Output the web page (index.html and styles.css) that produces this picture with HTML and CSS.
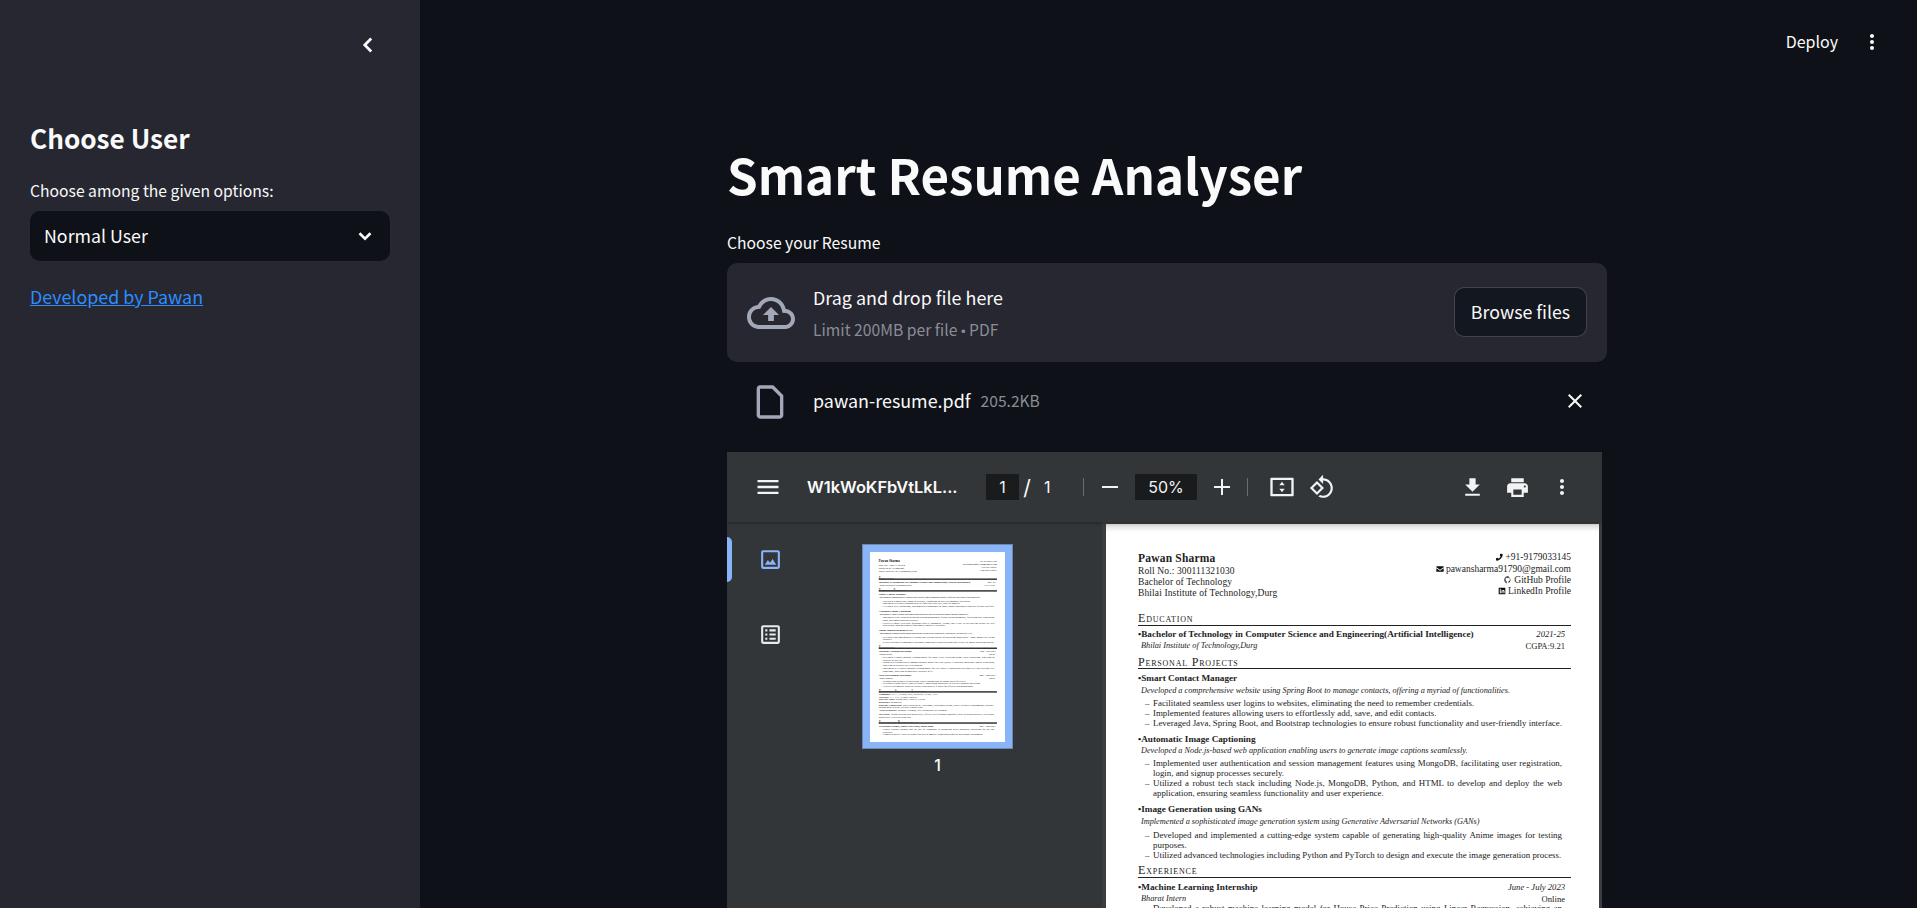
FILE: index.html
```html
<!DOCTYPE html>
<html lang="en">
<head>
<meta charset="utf-8">
<title>Smart Resume Analyser</title>
<link rel="stylesheet" href="styles.css">
</head>
<body>
<div class="app">
  <aside class="sidebar">
    <div class="collapse-row">
      <svg class="collapse-icon" viewBox="0 0 24 24"><path d="M15.5 5 8.500 12l7 7" fill="none" stroke="currentColor" stroke-width="3"/></svg>
    </div>
    <h2 class="side-title">Choose User</h2>
    <div class="field-label side-label">Choose among the given options:</div>
    <div class="select">
      <span class="select-value">Normal User</span>
      <svg class="select-icon" viewBox="0 0 24 24"><path d="M6 9l6 6 6-6" fill="none" stroke="currentColor" stroke-width="2.8"/></svg>
    </div>
    <a class="dev-link" href="#">Developed by Pawan</a>
  </aside>

  <main class="main">
    <header class="topbar">
      <span class="deploy">Deploy</span>
      <svg class="kebab" viewBox="0 0 24 24"><path fill="currentColor" d="M12 8c1.1 0 2-.9 2-2s-.9-2-2-2-2 .9-2 2 .9 2 2 2zm0 2c-1.1 0-2 .9-2 2s.9 2 2 2 2-.9 2-2-.9-2-2-2zm0 6c-1.1 0-2 .9-2 2s.9 2 2 2 2-.9 2-2-.9-2-2-2z"/></svg>
    </header>

    <div class="content">
      <h1 class="title">Smart Resume Analyser</h1>
      <div class="field-label upload-label">Choose your Resume</div>
      <section class="dropzone">
        <svg class="cloud" viewBox="0 0 24 24"><path fill="currentColor" d="M19.35 10.04C18.67 6.59 15.64 4 12 4 9.11 4 6.6 5.64 5.35 8.04 2.34 8.36 0 10.91 0 14c0 3.31 2.69 6 6 6h13c2.76 0 5-2.24 5-5 0-2.64-2.05-4.78-4.65-4.96zM19 18H6c-2.21 0-4-1.79-4-4 0-2.05 1.53-3.76 3.56-3.97l1.07-.11.5-.95C8.08 7.14 9.94 6 12 6c2.62 0 4.88 1.86 5.39 4.43l.3 1.5 1.53.11c1.56.1 2.78 1.41 2.78 2.96 0 1.65-1.35 3-3 3zM8 13h2.55v3h2.9v-3H16l-4-4z"/></svg>
        <div class="drop-text">
          <div class="drop-main">Drag and drop file here</div>
          <div class="drop-sub">Limit 200MB per file <span class="dot">•</span> PDF</div>
        </div>
        <button class="browse">Browse files</button>
      </section>
      <div class="file-row">
        <svg class="file-icon" viewBox="0 0 24 24"><path fill="currentColor" d="M13.17 4 18 8.83V20H6V4h7.17M14 2H6c-1.1 0-2 .9-2 2v16c0 1.1.9 2 2 2h12c1.1 0 2-.9 2-2V8l-6-6z"/></svg>
        <span class="file-name">pawan-resume.pdf</span>
        <span class="file-size">205.2KB</span>
        <svg class="file-close" viewBox="0 0 24 24"><path fill="currentColor" d="M19 6.41 17.59 5 12 10.59 6.41 5 5 6.41 10.59 12 5 17.59 6.41 19 12 13.41 17.59 19 19 17.59 13.41 12z"/></svg>
      </div>

      <section class="viewer">
        <div class="toolbar">
          <svg class="tb-icon tb-menu" viewBox="0 0 24 24"><path fill="currentColor" d="M3 18h18v-2H3v2zm0-5h18v-2H3v2zm0-7v2h18V6H3z"/></svg>
          <span class="doc-name">W1kWoKFbVtLkL...</span>
          <span class="num-box page-box">1</span>
          <span class="slash">/</span>
          <span class="page-total">1</span>
          <span class="tb-sep sep-a"></span>
          <svg class="tb-icon tb-minus" viewBox="0 0 24 24"><path fill="currentColor" d="M4 11h16v2H4z"/></svg>
          <span class="num-box zoom-box">50%</span>
          <svg class="tb-icon tb-plus" viewBox="0 0 24 24"><path fill="currentColor" d="M11 4h2v7h7v2h-7v7h-2v-7H4v-2h7z"/></svg>
          <span class="tb-sep sep-b"></span>
          <svg class="tb-icon tb-fit" viewBox="0 0 24 24"><path fill="currentColor" d="M21 4H3c-.6 0-1 .4-1 1v14c0 .6.4 1 1 1h18c.6 0 1-.4 1-1V5c0-.6-.4-1-1-1zm-1 14H4V6h16v12zM12 7.500 9.700 10.500h4.600zM12 16.500l2.300-3H9.700z"/></svg>
          <svg class="tb-icon tb-rotate" viewBox="0 0 24 24"><path fill="currentColor" d="M7.34 6.41.86 12.9l6.49 6.48 6.49-6.48-6.5-6.49zM3.69 12.9l3.66-3.66L11 12.9l-3.66 3.66-3.65-3.66zm15.67-6.26C17.61 4.88 15.3 4 13 4V.76L8.76 5 13 9.24V6c1.79 0 3.58.68 4.95 2.05 2.73 2.73 2.73 7.17 0 9.9C16.58 19.32 14.79 20 13 20c-.97 0-1.94-.21-2.84-.61l-1.49 1.49C10.02 21.62 11.51 22 13 22c2.3 0 4.61-.88 6.36-2.64 3.52-3.51 3.52-9.21 0-12.72z"/></svg>
          <svg class="tb-icon tb-download" viewBox="0 0 24 24"><path fill="currentColor" d="M19 9h-4V3H9v6H5l7 7 7-7zM5 18v2h14v-2H5z"/></svg>
          <svg class="tb-icon tb-print" viewBox="0 0 24 24"><path fill="currentColor" d="M19 8H5c-1.66 0-3 1.34-3 3v6h4v4h12v-4h4v-6c0-1.66-1.34-3-3-3zm-3 11H8v-5h8v5zm3-7c-.55 0-1-.45-1-1s.45-1 1-1 1 .45 1 1-.45 1-1 1zm-1-9H6v4h12V3z"/></svg>
          <svg class="tb-icon tb-more" viewBox="0 0 24 24"><path fill="currentColor" d="M12 8c1.1 0 2-.9 2-2s-.9-2-2-2-2 .9-2 2 .9 2 2 2zm0 2c-1.1 0-2 .9-2 2s.9 2 2 2 2-.9 2-2-.9-2-2-2zm0 6c-1.1 0-2 .9-2 2s.9 2 2 2 2-.9 2-2-.9-2-2-2z"/></svg>
        </div>
        <div class="viewer-body">
          <div class="rail">
            <span class="rail-mark"></span>
            <svg class="rail-icon rail-thumb" viewBox="0 0 24 24"><path fill="currentColor" d="M19 3H5c-1.1 0-2 .9-2 2v14c0 1.1.9 2 2 2h14c1.1 0 2-.9 2-2V5c0-1.1-.9-2-2-2zm0 16H5V5h14v14zM6.500 17l3-4.500 2 2.500 2.500-3.500 3.500 5.500z"/></svg>
            <svg class="rail-icon rail-list" viewBox="0 0 24 24"><path fill="currentColor" d="M19 3H5c-1.1 0-2 .9-2 2v14c0 1.1.9 2 2 2h14c1.1 0 2-.9 2-2V5c0-1.1-.9-2-2-2zm0 16H5V5h14v14zM7 7h2v2H7zm4 0h6v2h-6zm-4 4h2v2H7zm4 0h6v2h-6zm-4 4h2v2H7zm4 0h6v2h-6z"/></svg>
          </div>
          <div class="thumbs">
            <div class="thumb">
              <div class="thumb-page">
                <div class="resume resume-mini">
                  <div class="res-head"><div><div class="r-name">Pawan Sharma</div><div class="r-h">Roll No.: 300111321030</div><div class="r-h">Bachelor of Technology</div><div class="r-h">Bhilai Institute of Technology,Durg</div></div><div class="res-contact"><div class="r-h">+91-9179033145</div><div class="r-h">pawansharma91790@gmail.com</div><div class="r-h">GitHub Profile</div><div class="r-h">LinkedIn Profile</div></div></div>
                  <h3 class="r-sec r-first">Education</h3>
                  <div class="r-proj r-tight r-row"><span>•Bachelor of Technology in Computer Science and Engineering(Artificial Intelligence)</span><i class="r-date">2021-25</i></div>
                  <div class="r-desc r-row r-flat"><i>Bhilai Institute of Technology,Durg</i><span class="r-date">CGPA:9.21</span></div>
                  <h3 class="r-sec">Personal Projects</h3>
                  <div class="r-proj r-tight">•Smart Contact Manager</div>
                  <div class="r-desc r-gain"><i>Developed a comprehensive website using Spring Boot to manage contacts, offering a myriad of functionalities.</i></div>
                  <div class="r-bul">Facilitated seamless user logins to websites, eliminating the need to remember credentials.</div>
                  <div class="r-bul">Implemented features allowing users to effortlessly add, save, and edit contacts.</div>
                  <div class="r-bul">Leveraged Java, Spring Boot, and Bootstrap technologies to ensure robust functionality and user-friendly interface.</div>
                  <div class="r-proj">•Automatic Image Captioning</div>
                  <div class="r-desc"><i>Developed a Node.js-based web application enabling users to generate image captions seamlessly.</i></div>
                  <div class="r-bul r-j">Implemented user authentication and session management features using MongoDB, facilitating user registration,</div>
                  <div class="r-bul r-cont">login, and signup processes securely.</div>
                  <div class="r-bul r-j">Utilized a robust tech stack including Node.js, MongoDB, Python, and HTML to develop and deploy the web</div>
                  <div class="r-bul r-cont">application, ensuring seamless functionality and user experience.</div>
                  <div class="r-proj">•Image Generation using GANs</div>
                  <div class="r-desc r-gain"><i>Implemented a sophisticated image generation system using Generative Adversarial Networks (GANs)</i></div>
                  <div class="r-bul r-j r-gain">Developed and implemented a cutting-edge system capable of generating high-quality Anime images for testing</div>
                  <div class="r-bul r-cont">purposes.</div>
                  <div class="r-bul">Utilized advanced technologies including Python and PyTorch to design and execute the image generation process.</div>
                  <h3 class="r-sec">Experience</h3>
                  <div class="r-proj r-tight r-row"><span>•Machine Learning Internship</span><i class="r-date">June - July 2023</i></div>
                  <div class="r-desc r-row r-short"><i>Bharat Intern</i><span class="r-date">Online</span></div>
                  <div class="r-bul r-j">Developed a robust machine learning model for House Price Prediction using Linear Regression, achieving an</div>
                  <div class="r-bul r-cont">accuracy of over 85.</div>
                  <div class="r-bul r-j">Engineered a sophisticated bagging ensemble model for Wine Quality Evaluation employing Logistic Regression,</div>
                  <div class="r-bul r-cont">achieving an accuracy rate exceeding 90.</div>
                  <div class="r-bul r-j">Implemented a versatile machine learning model for Iris Flower Classification utilizing KNN and Decision Tree</div>
                  <div class="r-bul r-cont">algorithms, achieving an impressive accuracy of 97.</div>
                  <div class="r-proj r-row"><span>•Web Development Internship</span><i class="r-date">May - June 2023</i></div>
                  <div class="r-desc r-row r-short"><i>Oasis Infobyte</i><span class="r-date">Online</span></div>
                  <div class="r-bul">Designed and deployed a captivating Tribute landing page to engage users effectively.</div>
                  <div class="r-bul">Developed a high-fidelity clone of Disney+ showcasing proficiency in web development and design.</div>
                  <div class="r-bul">Created a streamlined ToDo list website with intuitive features for efficient task management.</div>
                  <h3 class="r-sec">Technical Skills and Interests</h3>
                  <div class="r-line"><b>Languages:</b> C/C++, Python, Java, JavaScript, HTML, CSS</div>
                  <div class="r-line"><b>Libraries:</b> C++ STL, Python Libraries</div>
                  <div class="r-line"><b>Web Dev Tools:</b> Spring Boot, Node.js, GitHub</div>
                  <div class="r-line"><b>Databases:</b> MongoDB</div>
                  <div class="r-line"><b>Relevant Coursework:</b> Data Structures &amp; Algorithms, Operating Systems, Object Oriented Programming, Database</div>
                  <div class="r-line">Management System, Software Engineering</div>
                  <div class="r-line"><b>Areas of Interest:</b> Machine Learning, Web Design and Development</div>
                  <div class="r-line r-gap"><b>Soft Skills:</b> Strong problem-solving abilities, effective self-learning techniques, adept presentation skills, exceptional</div>
                  <div class="r-line">adaptability to diverse situations.</div>
                  <h3 class="r-sec">Positions of Responsibility</h3>
                  <div class="r-proj r-tight r-row"><span>•Vocational Trainee, Bhilai Steel Plant, Bhilai Durg</span><i class="r-date">May - June 2023</i></div>
                  <div class="r-bul r-j">Gained valuable insights into the role of technology in optimizing heavy machinery operations for rail line</div>
                  <div class="r-bul r-cont">structures.</div>
                  <div class="r-bul">Conducted on-site visits to various facilities to immerse in and understand the operational environment.</div>
                </div>
              </div>
            </div>
            <div class="thumb-num">1</div>
          </div>
          <div class="pages">
            <article class="page">
              <div class="resume">
                <div class="res-head">
                  <div>
                    <div class="r-name">Pawan Sharma</div>
                    <div class="r-h">Roll No.: 300111321030</div>
                    <div class="r-h">Bachelor of Technology</div>
                    <div class="r-h">Bhilai Institute of Technology,Durg</div>
                  </div>
                  <div class="res-contact">
                    <div class="r-h"><svg class="c-icon" viewBox="0 0 24 24"><path fill="currentColor" d="M20 2h-4l-2 6 3 2c-1 3-3 5-6 7l-2-3-6 2v4c0 2 1 3 3 3C15 22 23 12 23 5c0-2-1-3-3-3z"/></svg> +91-9179033145</div>
                    <div class="r-h"><svg class="c-icon" viewBox="0 0 24 24"><path fill="currentColor" d="M1 4h22v3l-11 7L1 7zm0 6 11 7 11-7v10H1z"/></svg> pawansharma91790@gmail.com</div>
                    <div class="r-h"><svg class="c-icon" viewBox="0 0 24 24"><path fill="currentColor" d="M12 1a11 11 0 0 0-3.500 21.400V19c-3 .6-3.700-1.400-3.700-1.400-.5-1.200-1.200-1.600-1.200-1.600-1-.7 0-.7 0-.7 1.100 0 1.700 1.100 1.700 1.100 1 1.700 2.600 1.200 3.200.9.100-.7.400-1.200.7-1.500-2.400-.3-5-1.200-5-5.400 0-1.200.4-2.200 1.100-3-.1-.3-.5-1.400.1-2.900 0 0 .9-.3 3 1.100a10 10 0 0 1 5.400 0c2.100-1.400 3-1.100 3-1.100.6 1.500.2 2.600.1 2.900.7.800 1.100 1.800 1.100 3 0 4.200-2.600 5.100-5 5.400.4.300.7 1 .7 2v3.300A11 11 0 0 0 12 1z"/></svg> GitHub Profile</div>
                    <div class="r-h"><svg class="c-icon" viewBox="0 0 24 24"><path fill="currentColor" d="M2 2h20v20H2zm3.500 7.500V19h3V9.500zm1.500-4a1.700 1.700 0 1 0 0 3.400 1.700 1.700 0 0 0 0-3.400zm3.500 4V19h3v-5c0-3 3-3 3 0v5h3v-6c0-4.500-4.500-4.500-6-2.300V9.500z"/></svg> LinkedIn Profile</div>
                  </div>
                </div>
                <h3 class="r-sec r-first">Education</h3>
                <div class="r-proj r-tight r-row"><span>•Bachelor of Technology in Computer Science and Engineering(Artificial Intelligence)</span><i class="r-date">2021-25</i></div>
                <div class="r-desc r-row r-flat"><i>Bhilai Institute of Technology,Durg</i><span class="r-date">CGPA:9.21</span></div>
                <h3 class="r-sec">Personal Projects</h3>
                <div class="r-proj r-tight">•Smart Contact Manager</div>
                <div class="r-desc r-gain"><i>Developed a comprehensive website using Spring Boot to manage contacts, offering a myriad of functionalities.</i></div>
                <div class="r-bul">Facilitated seamless user logins to websites, eliminating the need to remember credentials.</div>
                <div class="r-bul">Implemented features allowing users to effortlessly add, save, and edit contacts.</div>
                <div class="r-bul">Leveraged Java, Spring Boot, and Bootstrap technologies to ensure robust functionality and user-friendly interface.</div>
                <div class="r-proj">•Automatic Image Captioning</div>
                <div class="r-desc"><i>Developed a Node.js-based web application enabling users to generate image captions seamlessly.</i></div>
                <div class="r-bul r-j">Implemented user authentication and session management features using MongoDB, facilitating user registration,</div>
                <div class="r-bul r-cont">login, and signup processes securely.</div>
                <div class="r-bul r-j">Utilized a robust tech stack including Node.js, MongoDB, Python, and HTML to develop and deploy the web</div>
                <div class="r-bul r-cont">application, ensuring seamless functionality and user experience.</div>
                <div class="r-proj">•Image Generation using GANs</div>
                <div class="r-desc r-gain"><i>Implemented a sophisticated image generation system using Generative Adversarial Networks (GANs)</i></div>
                <div class="r-bul r-j r-gain">Developed and implemented a cutting-edge system capable of generating high-quality Anime images for testing</div>
                <div class="r-bul r-cont">purposes.</div>
                <div class="r-bul">Utilized advanced technologies including Python and PyTorch to design and execute the image generation process.</div>
                <h3 class="r-sec r-near">Experience</h3>
                <div class="r-proj r-tight r-row"><span>•Machine Learning Internship</span><i class="r-date">June - July 2023</i></div>
                <div class="r-desc r-row r-short"><i>Bharat Intern</i><span class="r-date">Online</span></div>
                <div class="r-bul r-j">Developed a robust machine learning model for House Price Prediction using Linear Regression, achieving an</div>
              </div>
            </article>
          </div>
        </div>
      </section>
    </div>
  </main>
</div>
</body>
</html>
```
FILE: styles.css
```css
* { box-sizing: border-box; }
html, body { margin: 0; height: 100%; overflow: hidden; }
body {
  background: #0e1117;
  color: #fafafa;
  font-family: "Noto Sans CJK SC", "Noto Sans", sans-serif;
}
.app { display: flex; height: 908px; overflow: hidden; }

/* Sidebar */
.sidebar {
  flex: 0 0 420px;
  background: #262730;
  padding: 0 30px;
  display: flex;
  flex-direction: column;
  align-items: stretch;
}
.collapse-row { height: 90px; display: flex; align-items: center; justify-content: flex-end; padding-right: 11px; }
.collapse-icon { width: 22px; height: 22px; color: #fafafa; }
.side-title { margin: 28px 0 0; height: 40px; line-height: 40px; font-size: 26.2px; font-weight: 600; }
.field-label { font-size: 15.7px; height: 24px; line-height: 24px; }
.side-label { margin-top: 21px; }
.select {
  margin-top: 8px;
  height: 50px;
  border-radius: 10px;
  background: #0e1117;
  font-size: 17.8px;
  padding: 0 14px;
  display: flex;
  align-items: center;
  justify-content: space-between;
}
.select-value { padding-bottom: 2px; }
.select-icon { width: 22px; height: 22px; }
.dev-link { margin-top: 21px; font-size: 17.85px; line-height: 28px; color: #2b8eff; align-self: flex-start; }

/* Main */
.main { flex: 1; min-width: 0; display: flex; flex-direction: column; }
.topbar { height: 84px; flex: none; display: flex; align-items: center; justify-content: flex-end; padding-right: 33px; }
.deploy { font-size: 16px; margin-right: 22px; padding-bottom: 2px; }
.kebab { width: 24px; height: 24px; }
.content { width: 880px; margin-left: 307px; display: flex; flex-direction: column; flex: 1; min-height: 0; }
.title { margin: 55px 0 0; height: 70px; line-height: 70px; font-size: 49.2px; font-weight: 700; white-space: nowrap; }
.upload-label { margin-top: 22px; }
.dropzone {
  margin-top: 8px;
  height: 99px;
  flex: none;
  background: #262730;
  border-radius: 10px;
  display: flex;
  align-items: center;
  padding: 0 20px;
}
.cloud { width: 48px; height: 48px; color: #a3a8b8; flex: none; }
.drop-text { margin-left: 18px; flex: 1; }
.drop-main { font-size: 17.9px; line-height: 30px; }
.drop-sub { font-size: 15.7px; line-height: 24px; margin-top: 6px; color: #8a8d95; }
.dot { font-family: "Liberation Sans", sans-serif; font-size: 13px; }
.browse {
  width: 133px;
  height: 50px;
  margin-top: -1px;
  padding: 0 0 3px;
  background: #13171f;
  color: #fafafa;
  border: 1px solid rgba(250, 250, 250, .2);
  border-radius: 10px;
  font: inherit;
  font-size: 17.8px;
}
.file-row { height: 50px; margin-top: 14px; flex: none; display: flex; align-items: center; padding-left: 29px; }
.file-icon { width: 40px; height: 40px; margin-left: -6px; margin-top: 1px; color: #a3a8b8; }
.file-name { margin-left: 23px; font-size: 17.9px; padding-bottom: 3px; }
.file-size { margin-left: 10px; font-size: 15.6px; color: #8a8d95; padding-bottom: 2px; }
.file-close { width: 24px; height: 24px; margin-left: auto; margin-right: 20px; }

/* PDF viewer */
.viewer { margin-top: 26px; width: 875px; flex: 1; min-height: 0; background: #323639; display: flex; flex-direction: column; overflow: hidden; }
.toolbar {
  height: 70px;
  flex: none;
  display: flex;
  align-items: center;
  padding-left: 27px;
  box-shadow: 0 1px 3px rgba(0, 0, 0, .35);
  position: relative;
  z-index: 1;
  font-family: "Inter", sans-serif;
}
.tb-icon { width: 24px; height: 24px; flex: none; color: #f1f3f4; }
.tb-menu { width: 28px; height: 28px; }
.doc-name { margin-left: 25px; width: 153px; font-size: 16.4px; font-weight: 600; white-space: nowrap; }
.num-box { background: #191b1c; height: 26px; line-height: 26px; text-align: center; font-size: 16px; color: #f1f3f4; flex: none; }
.page-box { margin-left: 26px; width: 33px; }
.slash { margin-left: 2px; font-size: 21px; width: 12px; text-align: center; }
.page-total { margin-left: 11px; font-size: 16px; width: 20px; }
.tb-sep { width: 1px; height: 18px; background: #6a6d70; flex: none; }
.sep-a { margin-left: 19px; }
.tb-minus { margin-left: 14px; }
.zoom-box { margin-left: 13px; width: 62px; }
.tb-plus { margin-left: 13px; }
.sep-b { margin-left: 13px; }
.tb-fit { margin-left: 20px; width: 28px; height: 28px; }
.tb-rotate { margin-left: 13px; width: 26px; height: 26px; }
.tb-download { margin-left: 125px; width: 25px; height: 25px; }
.tb-print { margin-left: 20px; width: 25px; height: 25px; }
.tb-more { margin-left: 20px; }

.viewer-body { flex: 1; min-height: 0; display: flex; }
.rail { flex: 0 0 86px; position: relative; display: flex; flex-direction: column; align-items: center; padding-top: 25px; }
.rail-mark { position: absolute; left: 0; top: 15px; width: 5px; height: 45px; background: #8ab4f8; border-radius: 0 5px 5px 0; }
.rail-icon { width: 25px; height: 25px; }
.rail-thumb { color: #8ab4f8; }
.rail-list { color: #e8eaed; margin-top: 50px; }
.thumbs { flex: 0 0 289px; display: flex; flex-direction: column; align-items: flex-start; padding: 22px 0 0 49px; }
.thumb { width: 151px; height: 205px; padding: 8px; background: #8ab4f8; box-shadow: 0 0 0 1px #6d86ad inset; flex: none; }
.thumb-page { width: 135px; height: 190px; background: #fff; overflow: hidden; position: relative; }
.thumb-num { width: 151px; text-align: center; margin-top: 6px; font-size: 16px; font-weight: 500; font-family: "Inter", sans-serif; }
.pages { flex: 1; min-width: 0; background: #3b3e41; padding: 2px 3px 0 4px; overflow: hidden; }
.page { width: 493px; height: 696px; background: linear-gradient(#d9d9d9, #fff 8px); }

/* Resume document */
.resume {
  width: 495px;
  padding: 28px 30px 0 32px;
  color: #222;
  font-family: "Liberation Serif", serif;
  font-size: 9px;
  line-height: 10px;
  white-space: nowrap;
}
.resume-mini { position: absolute; left: 0; top: 0; transform: scale(.273); transform-origin: 0 0; color: #111; }
.res-head { display: flex; justify-content: space-between; }
.res-contact { text-align: right; }
.res-contact .r-h { letter-spacing: 0; }
.r-name { font-size: 11.5px; line-height: 13px; font-weight: 700; letter-spacing: .2px; }
.r-h { font-size: 9.5px; line-height: 11px; letter-spacing: .12px; }
.r-h:nth-child(2) { line-height: 12px; }
.c-icon { width: 8px; height: 8px; vertical-align: -1px; color: #111; }
.r-sec {
  margin: 5px 0 0;
  height: 13.5px;
  line-height: 12px;
  font-size: 12px;
  font-weight: 400;
  font-variant: small-caps;
  letter-spacing: .8px;
  border-bottom: 1.5px solid #222;
}
.r-first { margin-top: 13px; }
.r-near { margin-top: 4px; }
.resume-mini .r-sec { border-bottom-width: 5px; }
.r-proj { margin-top: 6px; height: 11px; line-height: 11px; font-size: 9.2px; font-weight: 700; }
.r-tight { margin-top: 4px; }
.r-first + .r-tight { margin-top: 3px; }
.r-desc { height: 12px; line-height: 12px; font-size: 8.25px; margin-top: 0; padding-left: 3px; }
.r-desc.r-gain { margin-top: 1px; }
.r-flat { height: 11px; }
.r-short { height: 9px; }
.r-row { display: flex; justify-content: space-between; padding-right: 6px; }
.r-date { font-size: 8.6px; font-weight: 400; }
.r-bul { position: relative; height: 10px; line-height: 10px; font-size: 8.9px; margin-top: 0; padding-left: 15px; padding-right: 9px; }
.r-desc + .r-bul { margin-top: 1px; }
.r-desc + .r-bul.r-gain { margin-top: 2px; }
.r-bul::before { content: "–"; position: absolute; left: 7px; top: 0; }
.r-cont::before { content: none; }
.r-j { text-align: justify; text-align-last: justify; white-space: normal; }
.r-line { height: 10px; line-height: 10px; font-size: 9px; }
.r-gap { margin-top: 5px; }
```
